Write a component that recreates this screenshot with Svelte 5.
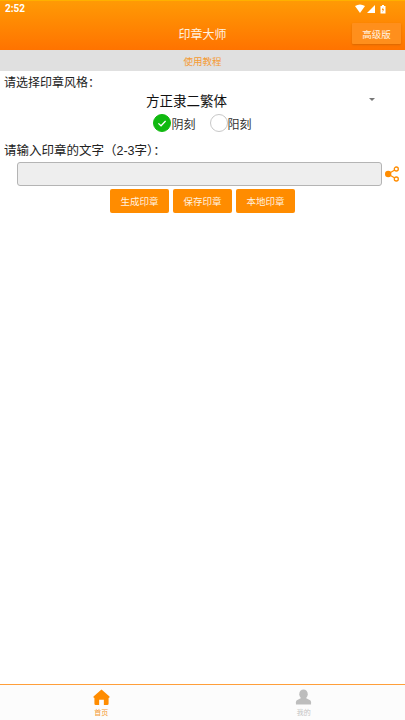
<script>
  let styleName = 'yin';
  const actions = ['生成印章', '保存印章', '本地印章'];
</script>

<div class="page">
  <header class="topbar">
    <div class="status">
      <span class="time">2:52</span>
      <svg class="status-icons" viewBox="0 0 33 10" aria-hidden="true">
        <path d="M0 2 Q5 -1 10 2 L5 9 Z" fill="#fff" />
        <path d="M12 9 L20 1 V9 Z" fill="#fff" />
        <path d="M25.500 2 h1.500 v-1 h2 v1 h1.500 v7.500 h-5 Z" fill="#fff" />
        <path d="M28.200 3 L26.800 6 h1 L27.400 8.500 L29.200 5.200 h-1 Z" fill="#ff8f00" />
      </svg>
    </div>
    <div class="appbar">
      <span class="title">印章大师</span>
      <button class="pro" type="button">高级版</button>
    </div>
  </header>

  <div class="tutorial">使用教程</div>

  <main class="content">
    <div class="label">请选择印章风格：</div>
    <div class="select">
      <span class="select-value">方正隶二繁体</span>
      <span class="caret"></span>
    </div>
    <div class="radios">
      <button class="radio" type="button" onclick={() => (styleName = 'yin')}>
        <span class="dot" class:on={styleName === 'yin'}>
          {#if styleName === 'yin'}
            <svg viewBox="0 0 20 20" aria-hidden="true"><path d="M5.500 10.500 L8.800 13.500 L14.500 7.500" fill="none" stroke="#fff" stroke-width="1.600" /></svg>
          {/if}
        </span>阴刻
      </button>
      <button class="radio" type="button" onclick={() => (styleName = 'yang')}>
        <span class="dot" class:on={styleName === 'yang'}>
          {#if styleName === 'yang'}
            <svg viewBox="0 0 20 20" aria-hidden="true"><path d="M5.500 10.500 L8.800 13.500 L14.500 7.500" fill="none" stroke="#fff" stroke-width="1.600" /></svg>
          {/if}
        </span>阳刻
      </button>
    </div>

    <div class="label second">请输入印章的文字（2-3字）：</div>
    <div class="input-row">
      <input class="text-input" type="text" aria-label="印章文字" />
      <svg class="share" viewBox="0 0 14 16" aria-hidden="true">
        <path d="M3 8 L11.500 3 M3 8 L11.500 13" stroke="#ff8c00" stroke-width="1.200" fill="none" />
        <circle cx="3.200" cy="8" r="3.200" fill="#ff8c00" />
        <circle cx="11.300" cy="3" r="2" fill="#fff" stroke="#ff8c00" stroke-width="1.300" />
        <circle cx="11.300" cy="13" r="2" fill="#fff" stroke="#ff8c00" stroke-width="1.300" />
      </svg>
    </div>
    <div class="actions">
      {#each actions as action}
        <button class="action" type="button">{action}</button>
      {/each}
    </div>
  </main>

  <nav class="tabs">
    <div class="tab active">
      <svg viewBox="0 0 18 18" aria-hidden="true">
        <path d="M9 0.500 L17.500 8 Q18 9.500 16.500 9.500 V15.500 Q16.500 17 15 17 H11.500 V11.500 H6.500 V17 H3 Q1.500 17 1.500 15.500 V9.500 Q0 9.500 0.500 8 Z" fill="#ff8c00" />
      </svg>
      <span>首页</span>
    </div>
    <div class="tab">
      <svg viewBox="0 0 18 18" aria-hidden="true">
        <ellipse cx="9" cy="5.500" rx="4.500" ry="5" fill="#bdbdbd" />
        <path d="M6.500 9.500 L2 12 Q1 12.700 1 14 V16.500 H17 V14 Q17 12.700 16 12 L11.500 9.500 Z" fill="#bdbdbd" />
      </svg>
      <span>我的</span>
    </div>
  </nav>
</div>

<style>
  :global(body) {
    background: #fff;
  }

  .page {
    height: 720px;
    display: flex;
    flex-direction: column;
    font-family: "Liberation Sans", "Noto Sans CJK SC", sans-serif;
    color: #222;
  }

  .topbar {
    height: 50px;
    background: linear-gradient(#ff9a05, #ff7300);
    border-top: 1px solid #ffb000;
    box-sizing: border-box;
    color: #fff;
    flex-shrink: 0;
  }

  .status {
    height: 15px;
    display: flex;
    align-items: center;
    justify-content: space-between;
    padding: 0 17px 0 5px;
  }

  .time {
    font-size: 10px;
    font-weight: 700;
    color: #fff;
    font-family: Roboto, sans-serif;
  }

  .status-icons {
    width: 33px;
    height: 10px;
  }

  .appbar {
    height: 34px;
    display: flex;
    align-items: center;
    justify-content: center;
    position: relative;
  }

  .title {
    font-size: 12px;
    color: #fff2e0;
  }

  .pro {
    position: absolute;
    right: 4px;
    top: 7px;
    width: 49px;
    height: 21px;
    padding: 0;
    border: none;
    border-radius: 1px;
    background: #ff8f1c;
    box-shadow: 0 1px 2px rgba(160, 80, 0, 0.4);
    color: #fff2e0;
    font: inherit;
    font-size: 9.500px;
  }

  .tutorial {
    height: 21px;
    background: #e0e0e0;
    color: #f59a32;
    font-size: 9.500px;
    display: flex;
    align-items: center;
    justify-content: center;
    flex-shrink: 0;
  }

  .content {
    flex: 1;
    padding-top: 4px;
    display: flex;
    flex-direction: column;
  }

  .label {
    font-size: 12px;
    line-height: 16px;
    padding-left: 4px;
    color: #222;
  }

  .label.second {
    margin-top: 10px;
    font-size: 12.500px;
  }

  .select {
    height: 20px;
    margin-top: -1px;
    padding-left: 146px;
    display: flex;
    align-items: center;
    position: relative;
  }

  .select-value {
    font-size: 13.500px;
    color: #111;
  }

  .caret {
    position: absolute;
    left: 369px;
    top: 8px;
    border: 3px solid transparent;
    border-top-color: #777;
    border-bottom: none;
  }

  .radios {
    display: flex;
    justify-content: center;
    gap: 14px;
    height: 20px;
    margin-top: 3px;
  }

  .radio {
    display: flex;
    align-items: center;
    border: none;
    background: none;
    padding: 0;
    font: inherit;
    font-size: 12px;
    color: #333;
  }

  .dot {
    width: 16px;
    height: 16px;
    border-radius: 50%;
    border: 1px solid #c8c8c8;
    background: #fff;
    display: flex;
  }

  .dot.on {
    background: #10b910;
    border-color: #10b910;
  }

  .input-row {
    display: flex;
    align-items: center;
    gap: 3px;
    margin-top: 3px;
    padding-left: 17px;
  }

  .text-input {
    width: 365px;
    height: 24px;
    box-sizing: border-box;
    background: #eeeeee;
    border: 1px solid #b4b4b4;
    border-radius: 3px;
    padding: 0 4px;
    outline: none;
  }

  .share {
    width: 14px;
    height: 16px;
  }

  .actions {
    display: flex;
    justify-content: center;
    gap: 4px;
    margin-top: 3px;
  }

  .action {
    width: 59px;
    height: 24px;
    padding: 0;
    border: none;
    border-radius: 2px;
    background: #ff8c00;
    color: #fff2e0;
    font: inherit;
    font-size: 9.500px;
  }

  .tabs {
    height: 36px;
    flex-shrink: 0;
    box-sizing: border-box;
    border-top: 1px solid #ff9f3a;
    background: #fcfcfc;
    display: flex;
  }

  .tab {
    flex: 1;
    display: flex;
    flex-direction: column;
    align-items: center;
    font-size: 7px;
    color: #c4c4c4;
    padding-top: 4px;
  }

  .tab svg {
    width: 17px;
    height: 17px;
  }

  .tab span {
    line-height: 12px;
    margin-top: 1px;
  }

  .tab.active {
    color: #f59a32;
  }
</style>
